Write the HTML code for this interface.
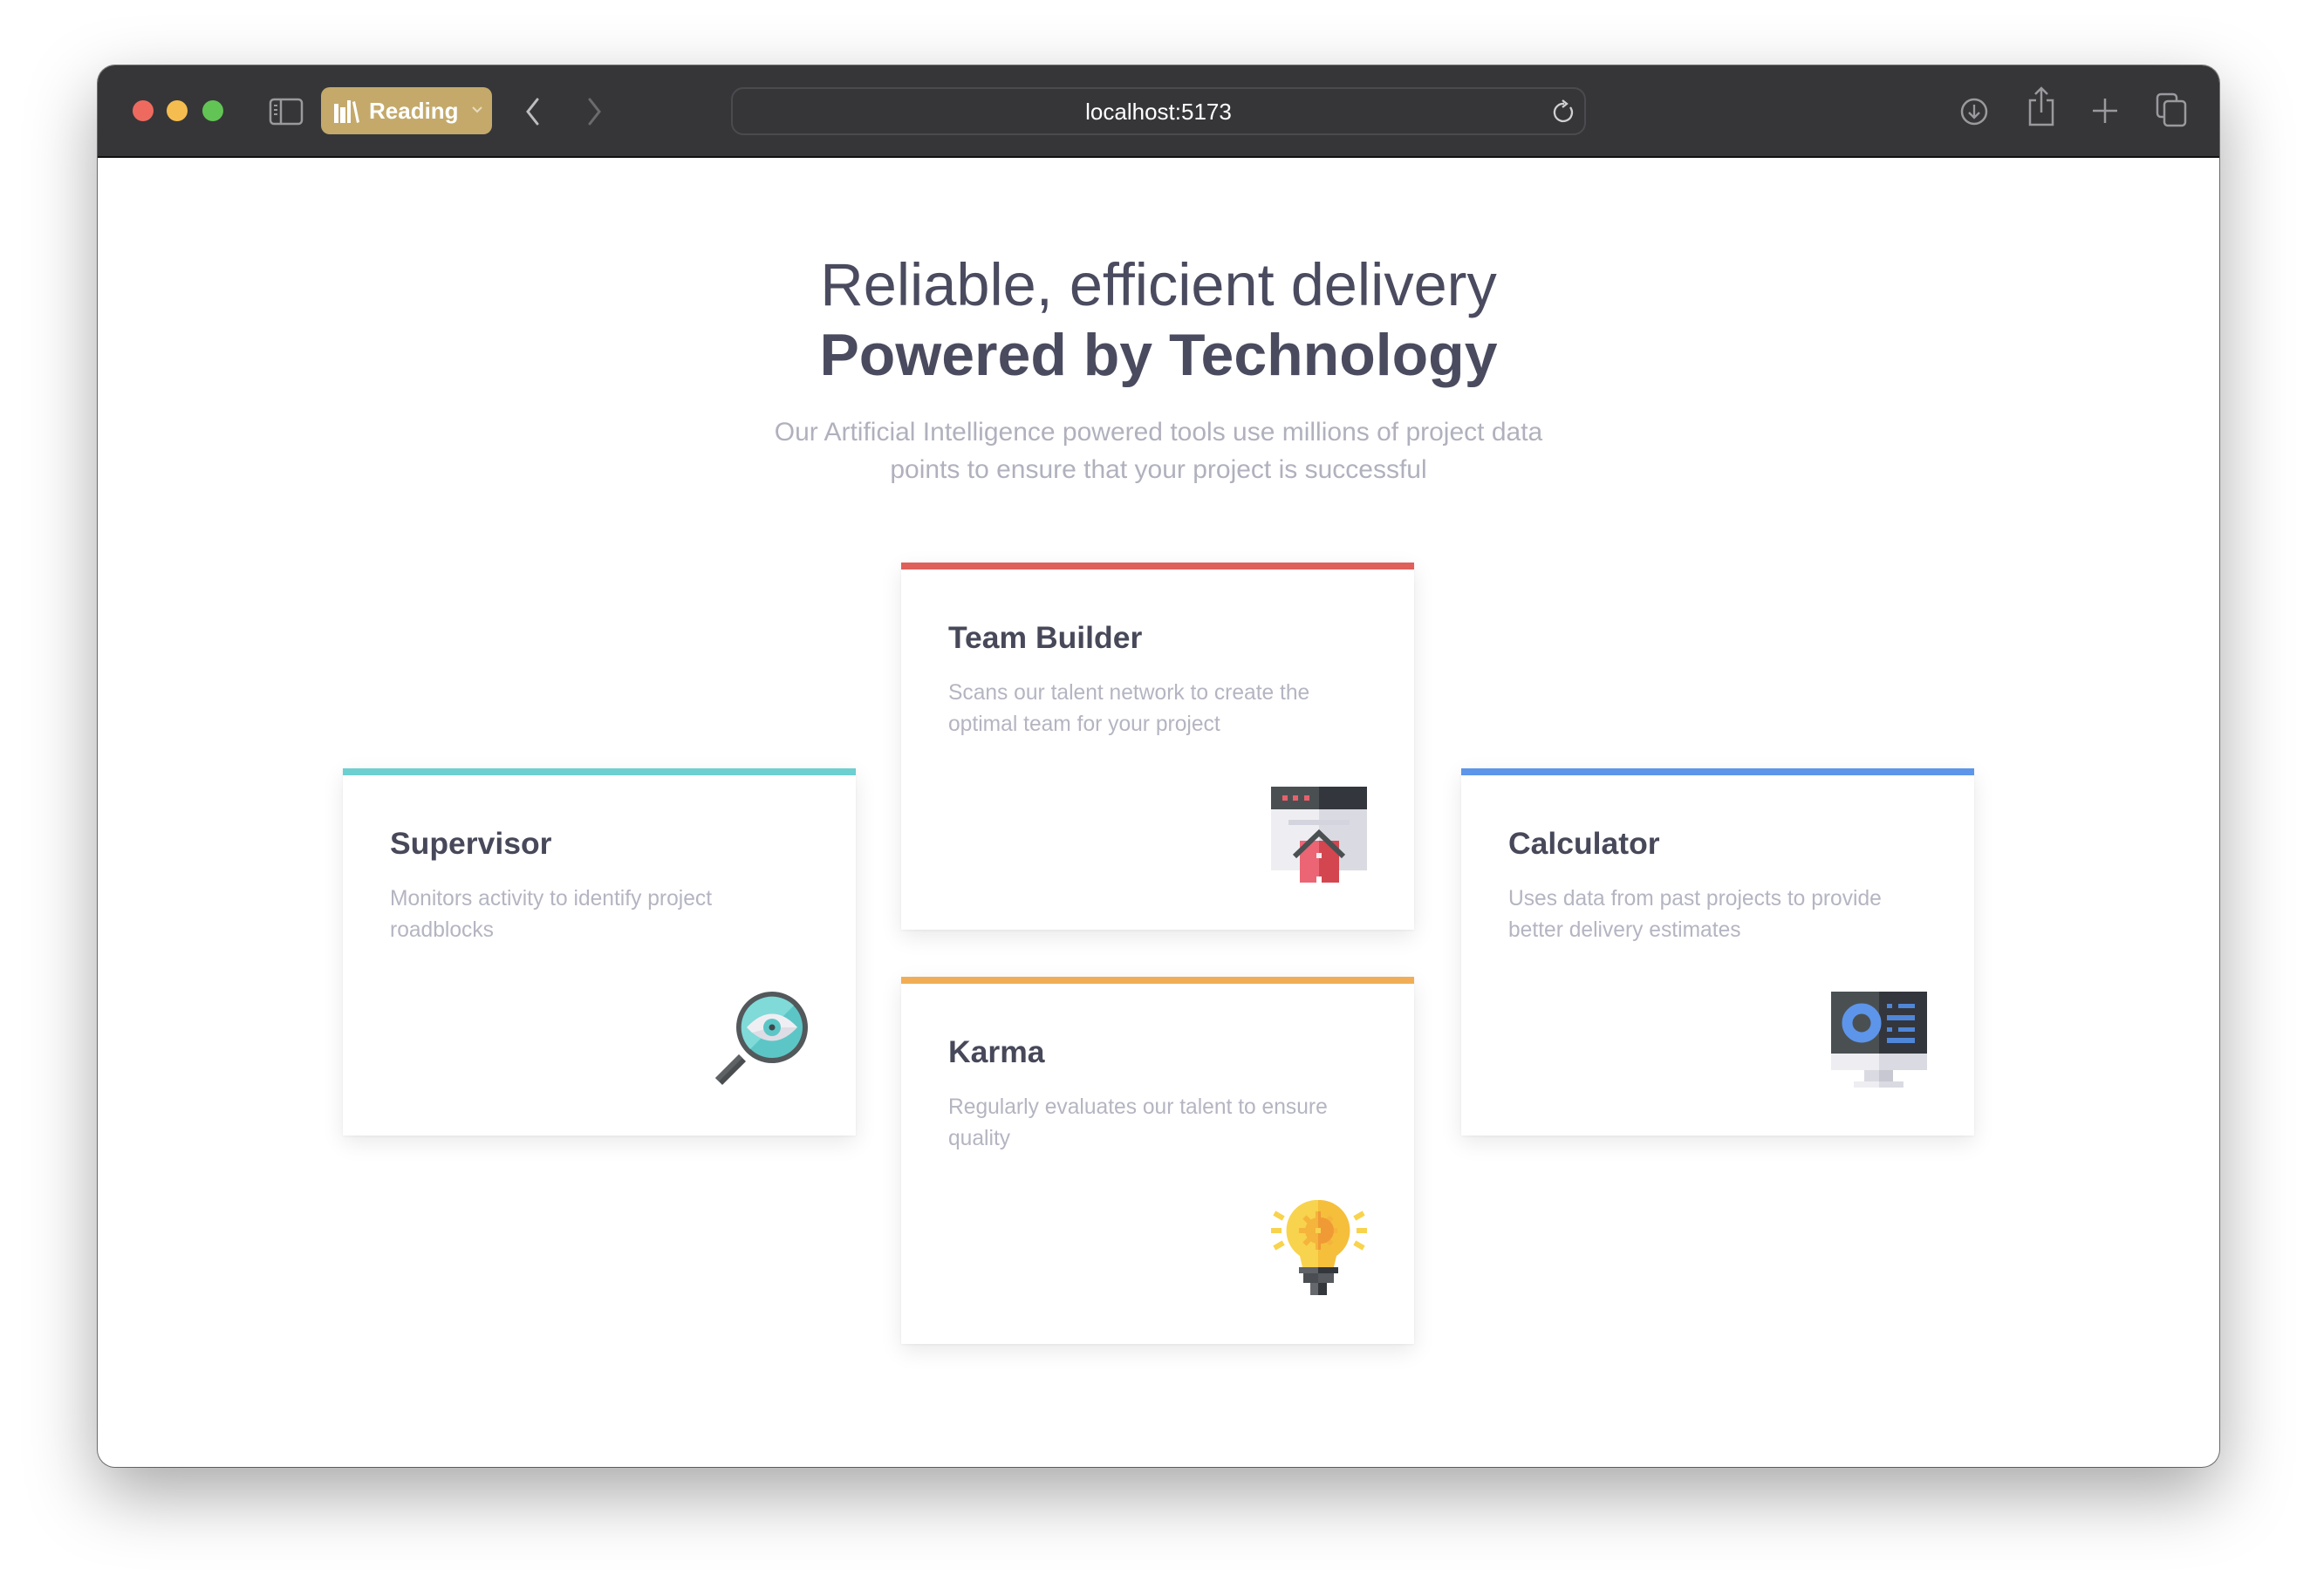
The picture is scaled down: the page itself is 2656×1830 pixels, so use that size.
<!DOCTYPE html>
<html><head><meta charset="utf-8"><style>
*{margin:0;padding:0;box-sizing:border-box}
html,body{width:2656px;height:1830px;background:#fff;overflow:hidden;font-family:"Liberation Sans",Arial,sans-serif}
.win{position:absolute;left:112px;top:75px;width:2432px;height:1607px;border-radius:20px;background:#fff;overflow:hidden;box-shadow:0 30px 80px rgba(0,0,0,.35),0 0 0 1px rgba(0,0,0,.5)}
.bar{position:absolute;left:0;top:0;width:100%;height:106px;background:#363639;border-bottom:2px solid #111}
.dot{position:absolute;top:115px;width:24px;height:24px;border-radius:50%}
.abs{position:absolute}
.h{position:absolute;left:0;width:2656px;text-align:center;color:#4a4b5f}
.card{position:absolute;width:588px;height:421px;background:#fff;box-shadow:0 8px 24px rgba(0,0,0,.09),0 1px 3px rgba(0,0,0,.05)}
.card .top{position:absolute;left:0;top:0;width:100%;height:8px}
.card .t{position:absolute;left:54px;top:66px;font-size:35.5px;line-height:40px;font-weight:bold;color:#474859;white-space:nowrap}
.card .d{position:absolute;left:54px;top:132px;font-size:24.6px;line-height:36px;color:#b4b5c1;white-space:nowrap}
.card svg.ic{position:absolute;right:54px;bottom:55px;width:110px;height:110px}
</style></head><body>
<div class="dot" style="left:152px;background:#ed6a5e"></div>
<div class="dot" style="left:191px;background:#f5bf4f"></div>
<div class="dot" style="left:232px;background:#61c554"></div>
<div class="win">
 <div class="bar">
  <div class="dot" style="left:40px;top:40px;background:#ee6a5f"></div>
  <div class="dot" style="left:79px;top:40px;background:#f5bd4f"></div>
  <div class="dot" style="left:120px;top:40px;background:#62c454"></div>
  <svg class="abs" style="left:196px;top:37px" width="40" height="32" viewBox="0 0 40 32"><rect x="2" y="2" width="36" height="28" rx="4" fill="none" stroke="#9a9a9e" stroke-width="2.5"/><line x1="14" y1="2" x2="14" y2="30" stroke="#9a9a9e" stroke-width="2.5"/><line x1="6" y1="9" x2="10" y2="9" stroke="#9a9a9e" stroke-width="2"/><line x1="6" y1="14" x2="10" y2="14" stroke="#9a9a9e" stroke-width="2"/><line x1="6" y1="19" x2="10" y2="19" stroke="#9a9a9e" stroke-width="2"/></svg>
  <div class="abs" style="left:256px;top:25px;width:196px;height:54px;border-radius:10px;background:#c4a96a"></div>
  <svg class="abs" style="left:270px;top:38px" width="30" height="28" viewBox="0 0 30 28"><g fill="#fff"><rect x="1" y="6" width="5" height="22"/><rect x="8" y="10" width="6" height="18"/><rect x="16" y="2" width="4" height="26"/><path d="M22 4 L25 3 L30 27 L27 28Z"/></g></svg>
  <div class="abs" style="left:311px;top:34px;font-size:26px;line-height:36px;font-weight:bold;color:#fff">Reading</div>
  <svg class="abs" style="left:428px;top:46px" width="14" height="10" viewBox="0 0 14 10"><path d="M2 2 L7 7 L12 2" fill="none" stroke="#e8dcc0" stroke-width="2"/></svg>
  <svg class="abs" style="left:488px;top:36px" width="20" height="34" viewBox="0 0 20 34"><path d="M16 3 L5 17 L16 31" fill="none" stroke="#bdbdc0" stroke-width="3" stroke-linecap="round"/></svg>
  <svg class="abs" style="left:560px;top:36px" width="20" height="34" viewBox="0 0 20 34"><path d="M4 3 L15 17 L4 31" fill="none" stroke="#6b6b6f" stroke-width="3" stroke-linecap="round"/></svg>
  <div class="abs" style="left:726px;top:25px;width:980px;height:55px;border:2px solid #4b4b4f;border-radius:14px"></div>
  <div class="abs" style="left:726px;top:26px;width:980px;height:55px;text-align:center;font-size:26px;line-height:55px;color:#fff">localhost:5173</div>
  <svg class="abs" style="left:1666px;top:38px" width="30" height="32" viewBox="0 0 30 32"><path d="M22 10 A10 10 0 1 1 15 6" fill="none" stroke="#d0d0d3" stroke-width="2.3"/><path d="M13 2 L18 6 L13 10" fill="none" stroke="#d0d0d3" stroke-width="2.3"/></svg>
  <svg class="abs" style="left:2134px;top:35px" width="34" height="36" viewBox="0 0 34 36"><circle cx="17" cy="18" r="14" fill="none" stroke="#9a9a9e" stroke-width="2.5"/><path d="M17 10 V25 M11 19 L17 25 L23 19" fill="none" stroke="#9a9a9e" stroke-width="2.3"/></svg>
  <svg class="abs" style="left:2210px;top:24px" width="36" height="46" viewBox="0 0 36 46"><path d="M12 16 H5 V44 H31 V16 H24" fill="none" stroke="#9a9a9e" stroke-width="2.5"/><path d="M18 2 V30 M11 9 L18 2 L25 9" fill="none" stroke="#9a9a9e" stroke-width="2.5"/></svg>
  <svg class="abs" style="left:2285px;top:36px" width="32" height="32" viewBox="0 0 32 32"><path d="M16 2 V30 M2 16 H30" stroke="#9a9a9e" stroke-width="2.5"/></svg>
  <svg class="abs" style="left:2358px;top:30px" width="38" height="42" viewBox="0 0 38 42"><rect x="3" y="3" width="22" height="26" rx="4" fill="none" stroke="#9a9a9e" stroke-width="2.5"/><rect x="11" y="11" width="24" height="28" rx="4" fill="#363639" stroke="#9a9a9e" stroke-width="2.5"/></svg>
 </div>
</div>

<div class="h" style="top:287px;font-size:68.5px;line-height:80px">Reliable, efficient delivery</div>
<div class="h" style="top:367px;font-size:68px;line-height:80px;font-weight:bold">Powered by Technology</div>
<div class="h" style="top:474px;font-size:30px;line-height:43px;color:#b0b1bd">Our Artificial Intelligence powered tools use millions of project data<br>points to ensure that your project is successful</div>

<!-- Supervisor -->
<div class="card" style="left:393px;top:881px">
 <div class="top" style="background:#6dcfcf"></div>
 <div class="t">Supervisor</div>
 <div class="d">Monitors activity to identify project<br>roadblocks</div>
 <svg class="ic" viewBox="0 0 110 110">
  <path d="M30 72 L3 99 L11 107 L38 80Z" fill="#4a4d50"/>
  <path d="M30 72 L3 99 L7 103 L34 76Z" fill="#5e6265"/>
  <circle cx="68" cy="41" r="41" fill="#53585b"/>
  <circle cx="68" cy="41" r="35" fill="#5cc6c6"/>
  <path d="M43 66 A35 35 0 0 1 93 16Z" fill="#7fdad8"/>
  <path d="M39 41 Q68 10 97 41 Q68 72 39 41Z" fill="#dedde6"/>
  <path d="M39 41 Q68 10 97 41 L68 41 L45 47Z" fill="#efeff3"/>
  <circle cx="68" cy="41" r="10" fill="#5cc6c6"/>
  <circle cx="68" cy="41" r="3.5" fill="#40464a"/>
 </svg>
</div>

<!-- Team Builder -->
<div class="card" style="left:1033px;top:645px">
 <div class="top" style="background:#df5f5b"></div>
 <div class="t">Team Builder</div>
 <div class="d">Scans our talent network to create the<br>optimal team for your project</div>
 <svg class="ic" viewBox="0 0 110 110" style="bottom:54px">
  <rect x="0" y="0" width="55" height="26" fill="#4a5052"/>
  <rect x="55" y="0" width="55" height="26" fill="#33363d"/>
  <rect x="0" y="26" width="55" height="70" fill="#eeeef2"/>
  <rect x="55" y="26" width="55" height="70" fill="#dadae2"/>
  <rect x="13" y="10" width="6" height="6" fill="#e8606d"/>
  <rect x="25" y="10" width="6" height="6" fill="#e8606d"/>
  <rect x="38" y="10" width="6" height="6" fill="#e8606d"/>
  <rect x="20" y="38" width="70" height="6" fill="#d4d4de"/>
  <rect x="33" y="62" width="22" height="48" fill="#eb6575"/>
  <rect x="55" y="62" width="23" height="48" fill="#d4464f"/>
  <path d="M27 80 L55 53 L83 80" fill="none" stroke="#4a5052" stroke-width="6"/>
  <rect x="52" y="76" width="6" height="6" fill="#eeeef2"/>
  <rect x="52" y="103" width="6" height="7" fill="#fff"/>
 </svg>
</div>

<!-- Karma -->
<div class="card" style="left:1033px;top:1120px">
 <div class="top" style="background:#f1ad55"></div>
 <div class="t">Karma</div>
 <div class="d">Regularly evaluates our talent to ensure<br>quality</div>
 <svg class="ic" viewBox="0 0 110 110">
  <path d="M54 0 A35 35 0 0 0 33 64 L36 77 H54Z" fill="#f8d34d"/>
  <path d="M54 0 A35 35 0 0 1 75 64 L72 77 H54Z" fill="#f5bf3b"/>
  <g fill="#f5b43c"><circle cx="54" cy="35" r="15"/><rect x="51" y="13" width="6" height="44"/><rect x="32" y="32" width="44" height="6"/><rect x="51" y="13" width="6" height="44" transform="rotate(45 54 35)"/><rect x="51" y="13" width="6" height="44" transform="rotate(-45 54 35)"/></g>
  <path d="M54 13 h3 v7 a15 15 0 0 1 0 30 v7 h-3Z" fill="#f09a36"/>
  <rect x="51" y="32" width="6" height="6" fill="#f8d34d"/>
  <g fill="#f8d34d"><rect x="0" y="32" width="12" height="6"/><rect x="98" y="32" width="12" height="6"/><rect x="3" y="15" width="12" height="6" transform="rotate(30 9 18)"/><rect x="3" y="49" width="12" height="6" transform="rotate(-30 9 52)"/><rect x="95" y="15" width="12" height="6" transform="rotate(-30 101 18)"/><rect x="95" y="49" width="12" height="6" transform="rotate(30 101 52)"/></g>
  <rect x="32" y="77" width="22" height="7" fill="#5f6367"/><rect x="54" y="77" width="23" height="7" fill="#33363b"/>
  <rect x="37" y="84" width="17" height="11" fill="#4a4d52"/><rect x="54" y="84" width="18" height="11" fill="#575b60"/>
  <rect x="45" y="95" width="9" height="14" fill="#65696e"/><rect x="54" y="95" width="10" height="14" fill="#34373b"/>
 </svg>
</div>

<!-- Calculator -->
<div class="card" style="left:1675px;top:881px">
 <div class="top" style="background:#5d95ea"></div>
 <div class="t">Calculator</div>
 <div class="d">Uses data from past projects to provide<br>better delivery estimates</div>
 <svg class="ic" viewBox="0 0 110 110">
  <rect x="0" y="0" width="55" height="71" fill="#4a5052"/>
  <rect x="55" y="0" width="55" height="71" fill="#33363d"/>
  <rect x="0" y="71" width="55" height="19" fill="#eeeef2"/>
  <rect x="55" y="71" width="55" height="19" fill="#dadae2"/>
  <rect x="38" y="90" width="17" height="13" fill="#dadae2"/><rect x="55" y="90" width="16" height="13" fill="#c8c8d2"/>
  <rect x="26" y="103" width="29" height="7" fill="#eeeef2"/><rect x="55" y="103" width="28" height="7" fill="#dadae2"/>
  <circle cx="35" cy="36" r="16.5" fill="none" stroke="#5d95ea" stroke-width="12"/>
  <g fill="#4f86d8"><rect x="64" y="14" width="6" height="5"/><rect x="77" y="14" width="19" height="5"/><rect x="64" y="27" width="32" height="6"/><rect x="64" y="41" width="6" height="5"/><rect x="77" y="41" width="19" height="5"/><rect x="64" y="53" width="32" height="6"/></g>
 </svg>
</div>
</body></html>
